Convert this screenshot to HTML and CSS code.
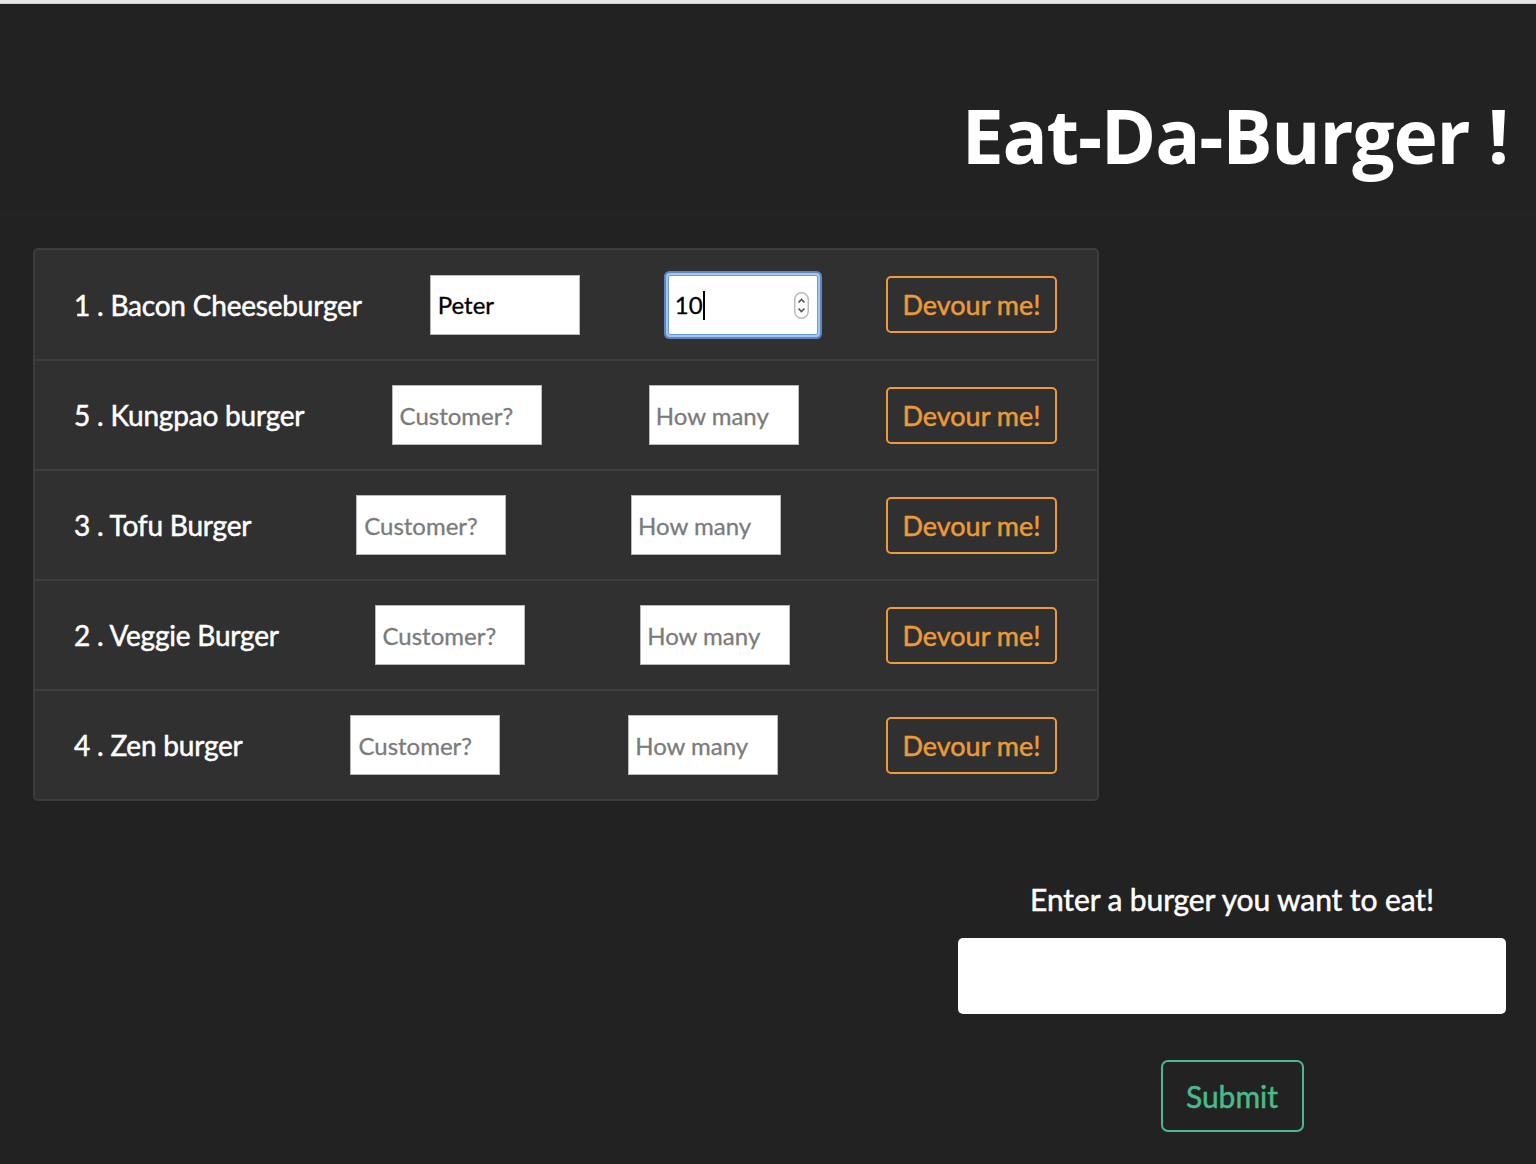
FILE: index.html
```html
<!DOCTYPE html>
<html lang="en">
<head>
<meta charset="utf-8">
<title>Eat-Da-Burger</title>
<link rel="stylesheet" href="styles.css">
</head>
<body>
<div class="topline"></div>
<header class="jumbo">
  <h1 class="title">Eat-Da-Burger !</h1>
</header>
<main class="content">
  <ul class="burgers">
    <li class="burger">
      <span class="name">1 . Bacon Cheeseburger</span>
      <input class="field" type="text" value="Peter" placeholder="Customer?">
      <span class="qty-wrap focused">
        <input class="field qty" type="text" value="10" placeholder="How many">
        <span class="caret"></span>
        <svg class="spin" viewBox="0 0 10 18" width="10" height="18" aria-hidden="true">
          <rect x="0.5" y="0.5" width="9" height="17" rx="4.5" fill="#fff" stroke="#bbb"/>
          <path d="M3 7 L5 5 L7 7" fill="none" stroke="#555" stroke-width="1.1"/>
          <path d="M3 11 L5 13 L7 11" fill="none" stroke="#555" stroke-width="1.1"/>
        </svg>
      </span>
      <button class="devour">Devour me!</button>
    </li>
    <li class="burger">
      <span class="name">5 . Kungpao burger</span>
      <input class="field" type="text" placeholder="Customer?">
      <span class="qty-wrap"><input class="field qty" type="text" placeholder="How many"></span>
      <button class="devour">Devour me!</button>
    </li>
    <li class="burger">
      <span class="name">3 . Tofu Burger</span>
      <input class="field" type="text" placeholder="Customer?">
      <span class="qty-wrap"><input class="field qty" type="text" placeholder="How many"></span>
      <button class="devour">Devour me!</button>
    </li>
    <li class="burger">
      <span class="name">2 . Veggie Burger</span>
      <input class="field" type="text" placeholder="Customer?">
      <span class="qty-wrap"><input class="field qty" type="text" placeholder="How many"></span>
      <button class="devour">Devour me!</button>
    </li>
    <li class="burger">
      <span class="name">4 . Zen burger</span>
      <input class="field" type="text" placeholder="Customer?">
      <span class="qty-wrap"><input class="field qty" type="text" placeholder="How many"></span>
      <button class="devour">Devour me!</button>
    </li>
  </ul>

  <form class="add-form">
    <label class="add-label" for="newburger">Enter a burger you want to eat!</label>
    <input class="add-input" id="newburger" type="text">
    <button class="submit" type="button">Submit</button>
  </form>
</main>
</body>
</html>
```

FILE: styles.css
```css
* { box-sizing: border-box; }

html, body {
  margin: 0;
  padding: 0;
  background: #222222;
  font-family: Lato, "Open Sans", "Liberation Sans", sans-serif;
  color: #ffffff;
}

.topline {
  height: 4px;
  background: #e6e6e6;
  border-bottom: 1px solid #cfcfcf;
}

.jumbo {
  height: 211px;
  background: #222222;
  border-bottom: 1px solid #252525;
  display: flex;
  justify-content: flex-end;
  align-items: flex-start;
  padding-right: 28px;
}

.title {
  margin: 86px 0 0 0;
  font-family: "Open Sans", "DejaVu Sans", sans-serif;
  font-weight: 700;
  font-size: 75px;
  line-height: 90px;
  letter-spacing: -1.2px;
  color: #ffffff;
}

.content {
  display: flex;
  flex-direction: column;
  padding: 33px 30px 0 33px;
}

.burgers {
  list-style: none;
  margin: 0;
  padding: 0;
  width: 1066px;
  background: #303030;
  border: 2px solid #3d3d3d;
  border-radius: 5px;
}

.burger {
  height: 110px;
  display: flex;
  align-items: center;
  justify-content: space-between;
  padding: 0 40px 0 39px;
  border-top: 2px solid #3d3d3d;
}

.burger:first-child { border-top: none; height: 109px; }

.name {
  font-size: 28px;
  letter-spacing: -0.2px;
  color: #ffffff;
  white-space: nowrap;
  -webkit-text-stroke: 0.5px #ffffff;
}

.field {
  width: 150px;
  height: 60px;
  border: 1px solid #b9b9b9;
  background: #ffffff;
  font-family: Lato, "Open Sans", sans-serif;
  font-size: 24px;
  color: #000000;
  padding: 0 7px;
  outline: none;
  -webkit-text-stroke: 0.3px currentColor;
}

.field::placeholder { color: #7b7b7b; }

.qty-wrap {
  position: relative;
  display: inline-flex;
  margin-left: 20px;
}

.qty { padding: 0 6px; }

.focused .qty {
  border: 1px solid #6c9ad8;
  box-shadow: 0 0 0 2px #a9c4ec, 0 0 0 4px #5c86c4;
  border-radius: 2px;
}

.caret {
  position: absolute;
  left: 35px;
  top: 16px;
  width: 2px;
  height: 29px;
  background: #000;
}

.spin {
  position: absolute;
  right: 9px;
  top: 17px;
  width: 15px;
  height: 27px;
}

.devour {
  width: 171px;
  height: 57px;
  border: 2px solid #ec9a3a;
  border-radius: 5px;
  background: transparent;
  color: #ec9a3a;
  font-family: Lato, "Open Sans", sans-serif;
  font-size: 27px;
  padding: 0;
  cursor: pointer;
  -webkit-text-stroke: 0.5px #ec9a3a;
}

.add-form {
  align-self: flex-end;
  width: 548px;
  margin-top: 78px;
  display: flex;
  flex-direction: column;
  align-items: center;
}

.add-label {
  font-size: 30px;
  letter-spacing: -0.1px;
  line-height: 40px;
  color: #ffffff;
  -webkit-text-stroke: 0.5px #ffffff;
}

.add-input {
  margin-top: 19px;
  width: 548px;
  height: 76px;
  border: none;
  border-radius: 5px;
  background: #ffffff;
  font-size: 24px;
}

.submit {
  margin-top: 46px;
  width: 143px;
  height: 72px;
  border: 2px solid #4bb98b;
  border-radius: 7px;
  background: transparent;
  color: #4bb98b;
  font-family: Lato, "Open Sans", sans-serif;
  font-size: 30px;
  padding: 0;
  -webkit-text-stroke: 0.5px #4bb98b;
}
```
